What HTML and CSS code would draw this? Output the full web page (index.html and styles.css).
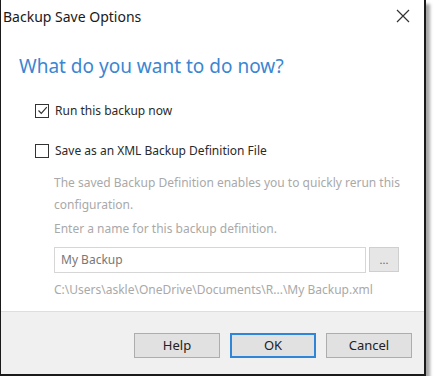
FILE: index.html
```html
<!DOCTYPE html>
<html>
<head>
<meta charset="utf-8">
<link rel="stylesheet" href="styles.css">
</head>
<body>
<div class="window">
  <div class="titlebar">
    <span class="title">Backup Save Options</span>
    <svg class="close" width="14" height="14" viewBox="0 0 14 14"><path d="M1 1 L13 13 M13 1 L1 13" stroke="#333" stroke-width="1.2" fill="none"/></svg>
  </div>
  <div class="content">
    <h1 class="heading">What do you want to do now?</h1>
    <div class="options">
      <label class="check">
        <span class="box"><svg width="11" height="11" viewBox="0 0 11 11"><path d="M1.5 5.5 L4.3 8.3 L9.8 2.2" stroke="#333" stroke-width="1.2" fill="none"/></svg></span>
        <span>Run this backup now</span>
      </label>
      <label class="check">
        <span class="box"></span>
        <span>Save as an XML Backup Definition File</span>
      </label>
    </div>
    <div class="sub">
      <p class="muted">The saved Backup Definition enables you to quickly rerun this configuration.</p>
      <p class="muted">Enter a name for this backup definition.</p>
      <div class="inputrow">
        <div class="input">My Backup</div>
        <div class="browse">...</div>
      </div>
      <p class="muted path">C:\Users\askle\OneDrive\Documents\R...\My Backup.xml</p>
    </div>
  </div>
  <div class="footer">
    <div class="btn">Help</div>
    <div class="btn default">OK</div>
    <div class="btn">Cancel</div>
  </div>
</div>
</body>
</html>
```
FILE: styles.css
```css
html, body {
  margin: 0;
  padding: 0;
  background: #ffffff;
}
body {
  font-family: "Noto Sans", "Open Sans", sans-serif;
  color: #222;
}
.window {
  box-sizing: border-box;
  width: 426px;
  height: 376px;
  border-left: 1px solid #1a1a1a;
  border-right: 2px solid #1a1a1a;
  border-bottom: 2px solid #1a1a1a;
  box-shadow: 4px 4px 3px rgba(0,0,0,0.35);
  display: flex;
  flex-direction: column;
  background: #fff;
}
.titlebar {
  height: 32px;
  display: flex;
  align-items: center;
  justify-content: space-between;
  padding: 0 14px 0 2px;
}
.title {
  font-size: 14px;
  color: #1a1a1a;
}
.close {
  display: block;
}
.content {
  flex: 1;
  padding: 0 0 0 18px;
}
.heading {
  margin: 20px 0 0 0;
  font-weight: normal;
  font-size: 19px;
  color: #3a86d2;
  line-height: 28px;
}
.options {
  margin: 22px 0 0 16px;
  display: flex;
  flex-direction: column;
  gap: 23px;
}
.check {
  display: flex;
  align-items: center;
  gap: 6px;
  font-size: 12px;
  color: #2a2a2a;
}
.box {
  box-sizing: border-box;
  width: 14px;
  height: 14px;
  border: 1px solid #333;
  background: #fff;
  display: flex;
  align-items: center;
  justify-content: center;
}
.sub {
  margin: 13px 0 0 35px;
}
.muted {
  margin: 0;
  font-size: 12px;
  line-height: 22px;
  color: #a9a9a9;
}
.sub p + p {
  margin-top: 2px;
}
.inputrow {
  display: flex;
  gap: 3px;
  margin-top: 7px;
}
.input {
  box-sizing: border-box;
  width: 312px;
  height: 26px;
  border: 1px solid #d6d6d6;
  padding: 0 6px;
  font-size: 12px;
  line-height: 24px;
  color: #777;
}
.browse {
  box-sizing: border-box;
  width: 30px;
  height: 25px;
  border: 1px solid #cfcfcf;
  background: #e6e6e6;
  color: #666;
  font-size: 11px;
  text-align: center;
  line-height: 24px;
}
.path {
  margin-top: 6px !important;
}
.footer {
  height: 63px;
  border-top: 1px solid #dedede;
  background: #f0f0f0;
  display: flex;
  justify-content: flex-end;
  align-items: flex-start;
  gap: 10px;
  padding: 21px 12px 0 0;
  box-sizing: border-box;
}
.btn {
  box-sizing: border-box;
  width: 86px;
  height: 25px;
  border: 1px solid #adadad;
  background: #e1e1e1;
  font-size: 13px;
  color: #222;
  text-align: center;
  line-height: 23px;
}
.btn.default {
  border: 2px solid #2f86d8;
  line-height: 21px;
}
```
